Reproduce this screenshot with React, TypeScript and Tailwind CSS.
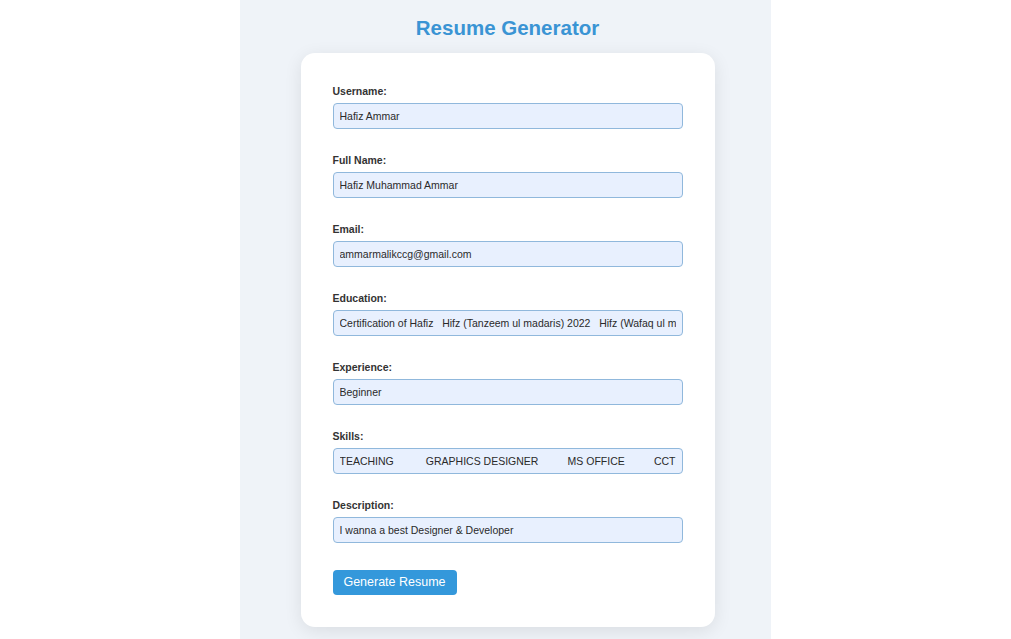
const fields = [
  { label: "Username:", value: "Hafiz Ammar" },
  { label: "Full Name:", value: "Hafiz Muhammad Ammar" },
  { label: "Email:", value: "ammarmalikccg@gmail.com" },
  {
    label: "Education:",
    value:
      "Certification of Hafiz   Hifz (Tanzeem ul madaris) 2022   Hifz (Wafaq ul madaris) 2023",
  },
  { label: "Experience:", value: "Beginner" },
  {
    label: "Skills:",
    value:
      "TEACHING           GRAPHICS DESIGNER          MS OFFICE          CCT",
  },
  { label: "Description:", value: "I wanna a best Designer & Developer" },
];

export default function App() {
  return (
    <div className="min-h-screen bg-white font-['Liberation_Sans',Arial,sans-serif]">
      <div className="mx-auto flex min-h-screen w-[531px] flex-col items-center bg-[#eff3f8] pt-[16px] pb-[12px]">
        <h1 className="ml-[4px] text-[20.5px] font-bold leading-[24px] text-[#3a94d4]">
          Resume Generator
        </h1>
        <form
          className="mt-[13px] ml-[4px] flex w-[414px] flex-col rounded-[14px] bg-white px-[32px] pt-[32px] pb-[32px] shadow-[0_4px_18px_rgba(0,0,0,0.09)]"
          onSubmit={(e) => e.preventDefault()}
        >
          {fields.map((f, i) => (
            <div key={f.label} className={i > 0 ? "mt-[25px]" : ""}>
              <label className="block text-[10.5px] font-bold leading-[12px] text-[#333]">
                {f.label}
              </label>
              <input
                readOnly
                value={f.value}
                className="mt-[6px] block h-[26px] w-full rounded-[4px] border border-[#90b8dc] bg-[#e8f0fe] px-[6px] text-[10.5px] text-[#2a2a2a] outline-none whitespace-pre"
              />
            </div>
          ))}
          <button
            type="submit"
            className="mt-[27px] h-[25px] w-[124px] rounded-[4px] bg-[#3498db] text-[12.5px] text-white"
          >
            Generate Resume
          </button>
        </form>
      </div>
    </div>
  );
}
